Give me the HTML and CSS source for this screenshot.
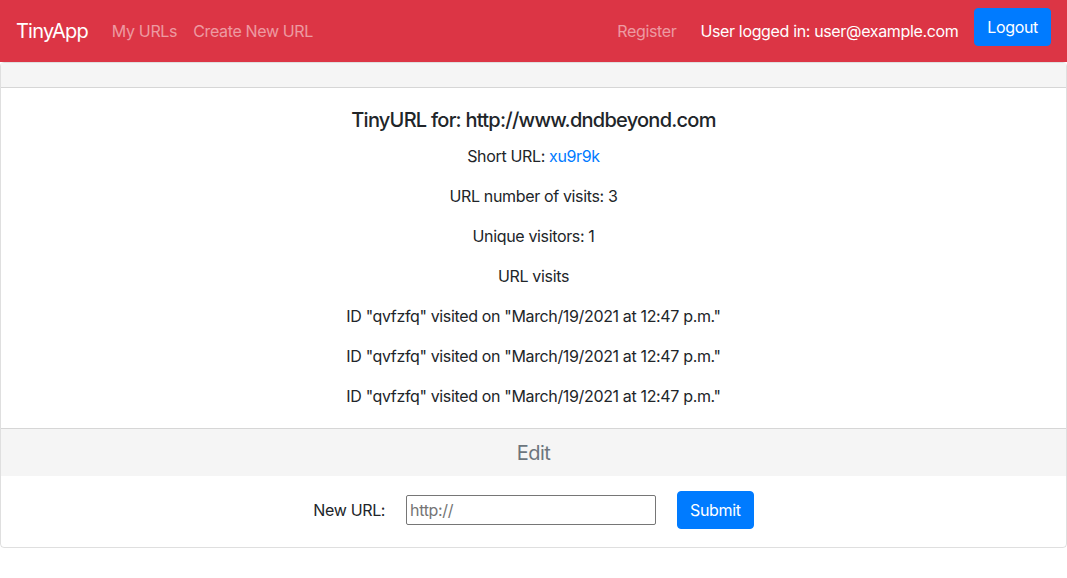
FILE: index.html
```html
<!DOCTYPE html>
<html lang="en">
<head>
<meta charset="utf-8">
<title>TinyApp</title>
<link rel="stylesheet" href="styles.css">
</head>
<body>
<nav class="navbar">
  <a class="brand" href="#">TinyApp</a>
  <ul class="nav">
    <li><a class="nav-link" href="#">My URLs</a></li>
    <li><a class="nav-link" href="#">Create New URL</a></li>
  </ul>
  <ul class="nav nav-right">
    <li><a class="nav-link" href="#">Register</a></li>
    <li><span class="nav-text">User logged in: user@example.com</span></li>
  </ul>
  <form class="logout-form">
    <button type="button" class="btn">Logout</button>
  </form>
</nav>
<main class="card">
  <div class="card-header"></div>
  <div class="card-body">
    <h5 class="card-title">TinyURL for: http://www.dndbeyond.com</h5>
    <p>Short URL: <a class="link" href="#">xu9r9k</a></p>
    <p>URL number of visits: 3</p>
    <p>Unique visitors: 1</p>
    <p>URL visits</p>
    <p>ID "qvfzfq" visited on "March/19/2021 at 12:47 p.m."</p>
    <p>ID "qvfzfq" visited on "March/19/2021 at 12:47 p.m."</p>
    <p class="last">ID "qvfzfq" visited on "March/19/2021 at 12:47 p.m."</p>
  </div>
  <div class="card-header edit-header">Edit</div>
  <div class="card-footer">
    <form class="edit-form">
      <label class="edit-label" for="newurl">New URL:</label>
      <input id="newurl" class="edit-input" type="text" placeholder="http://">
      <button type="button" class="btn">Submit</button>
    </form>
  </div>
</main>
</body>
</html>
```
FILE: styles.css
```css
* { box-sizing: border-box; }
body {
  margin: 0;
  font-family: "Inter", "Liberation Sans", sans-serif;
  font-size: 16px;
  line-height: 24px;
  letter-spacing: -0.35px;
  color: #212529;
  background: #fff;
}
a { text-decoration: none; }
.navbar {
  display: flex;
  align-items: center;
  min-height: 62px;
  padding: 0 16px;
  background: #dc3545;
}
.brand {
  color: #fff;
  font-size: 20px;
  line-height: 30px;
  letter-spacing: -0.8px;
  margin-right: 16px;
}
.nav {
  display: flex;
  list-style: none;
  margin: 0;
  padding: 0;
}
.nav-right { margin-left: auto; }
.nav-link {
  display: block;
  padding: 8px;
  color: rgba(255,255,255,.5);
}
.nav-text {
  display: block;
  padding: 8px 8px 8px 16px;
  color: #fff;
}
.logout-form {
  align-self: flex-start;
  margin: 8px 0 0 8px;
}
.btn {
  font-family: inherit;
  font-size: 16px;
  line-height: 24px;
  letter-spacing: -0.35px;
  padding: 6px 12px;
  color: #fff;
  background: #007bff;
  border: 1px solid #007bff;
  border-radius: 4px;
}
.card {
  display: flex;
  flex-direction: column;
  border: 1px solid rgba(0,0,0,.125);
  border-radius: 4px;
  width: 1067px;
}
.card-header {
  height: 25px;
  background: #f5f5f5;
  border-bottom: 1px solid rgba(0,0,0,.125);
}
.card-body {
  padding: 20px;
  text-align: center;
}
.card-title {
  margin: 0 0 12px;
  font-size: 20px;
  font-weight: 500;
  line-height: 24px;
  letter-spacing: -0.75px;
}
.card-body p { margin: 0 0 16px; }
.card-body p.last { margin-bottom: 0; }
.link { color: #007bff; }
.edit-header {
  height: 48px;
  border-top: 1px solid rgba(0,0,0,.125);
  border-bottom: 0;
  display: flex;
  align-items: center;
  justify-content: center;
  font-size: 20px;
  letter-spacing: -0.5px;
  color: #6c757d;
}
.card-footer {
  padding: 15px 20px 18px;
}
.edit-form {
  display: flex;
  align-items: center;
  justify-content: center;
}
.edit-label { margin-right: 21px; }
.edit-input {
  width: 250px;
  height: 30px;
  font-family: inherit;
  font-size: 16px;
  letter-spacing: -0.35px;
  padding: 2px 3px;
  border: 1px solid #767676;
  border-radius: 2px;
  margin-right: 21px;
}
.edit-input::placeholder { color: #757575; }
```
